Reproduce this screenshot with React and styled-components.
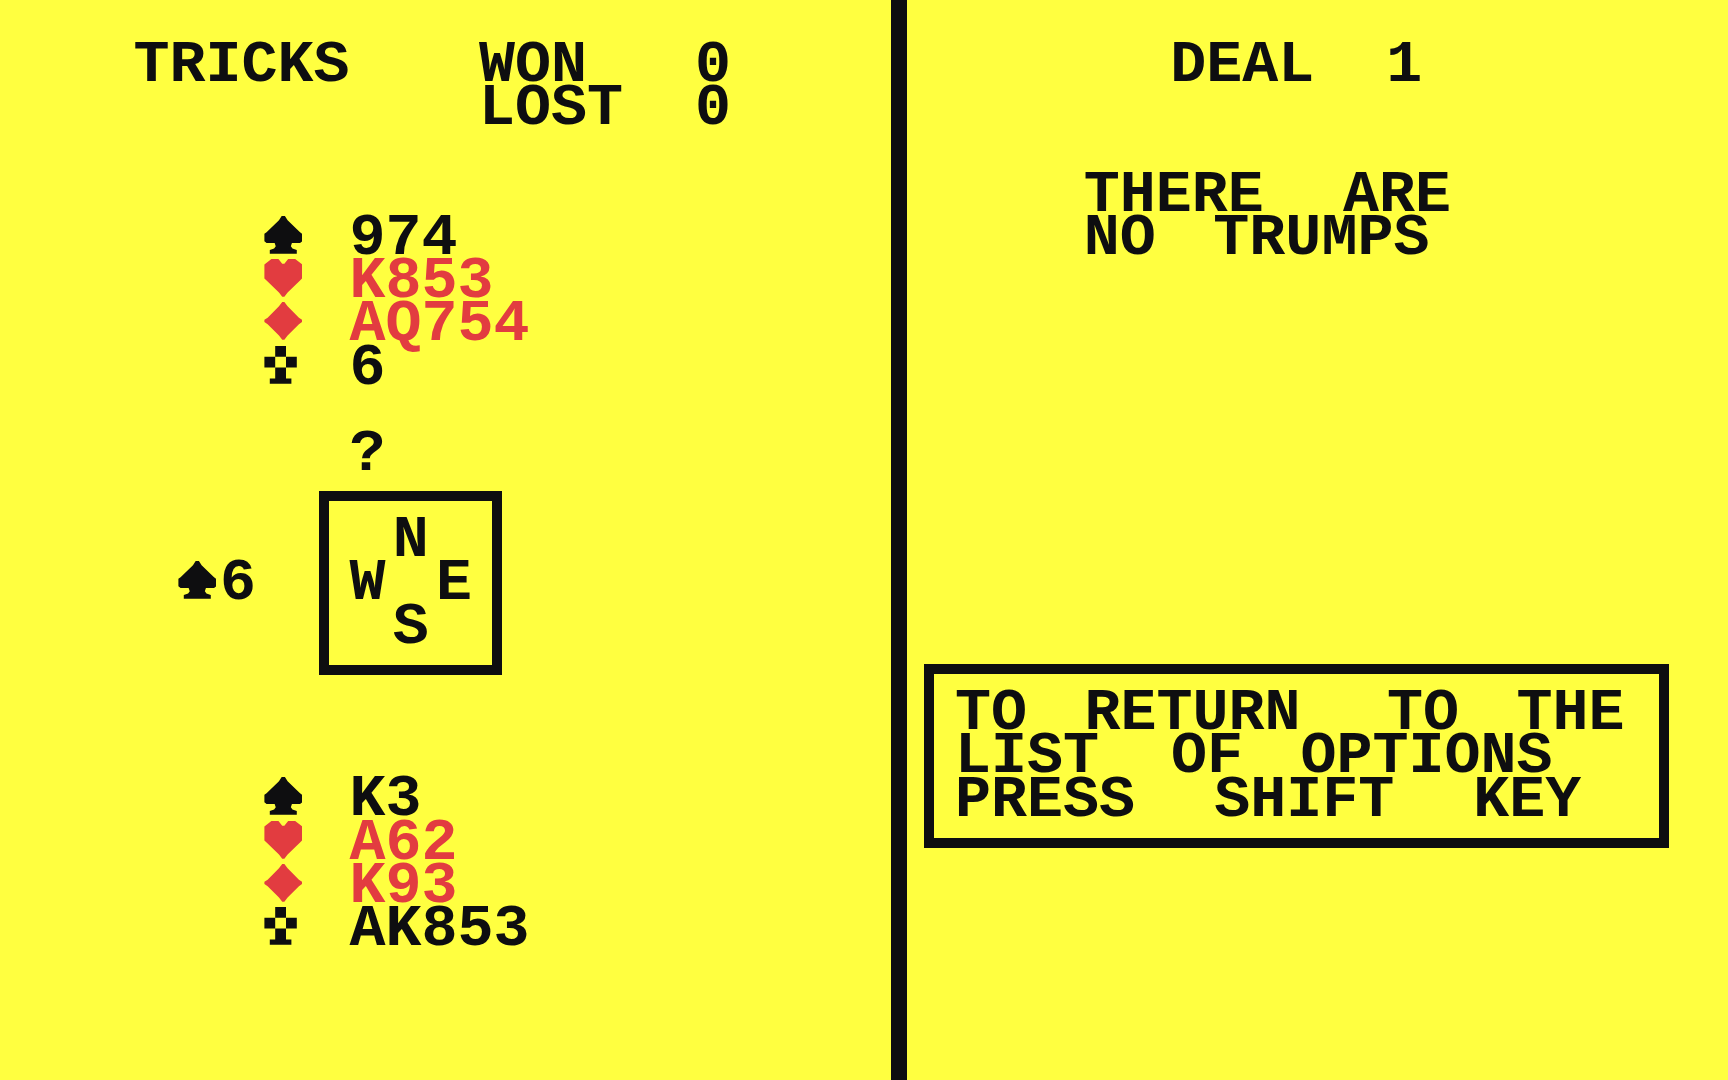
import React from 'react';
import styled, { createGlobalStyle } from 'styled-components';


const GlobalStyle = createGlobalStyle`
  body {
    margin: 0;
    background: #ffff40;
  }
`

//the screen is 40 columns by 25 rows of character cells
const Screen = styled.main`
  --col: 2.5vw;
  --row: 4vh;
  display: grid;
  grid-template-columns: 891fr 16px 821fr;
  min-height: 100vh;
  overflow: hidden;
  background: #ffff40;
  color: #0e0e10;
  font-family: "Liberation Mono", monospace;
  font-size: 60px;
  font-weight: 700;
`

const Divider = styled.div`
  background: #0e0e10;
`

const Panel = styled.section`
  padding-top: var(--row);
  min-width: 0;
`

//blank rows
const Gap = styled.div`
  height: calc(var(--row) * ${(props) => props.$rows});
`

const Indent = styled.div`
  padding-left: calc(var(--col) * ${(props) => props.$cols});
`

const Line = styled.p`
  display: grid;
  grid-auto-columns: var(--col);
  height: var(--row);
  margin: 0;
  line-height: var(--row);
  white-space: nowrap;
  color: ${(props) => (props.$red ? '#e23c40' : 'inherit')};
`

const Word = styled.span`
  grid-row: 1;
  grid-column: ${(props) => props.$at + 1} / span ${(props) => props.$length};
  padding: 1px 0 0 4px;
`

const Pip = styled.svg`
  grid-row: 1;
  grid-column: 1;
  width: var(--col);
  height: var(--row);
  fill: currentColor;
`

//compass and the card that was led
const Table = styled.div`
  display: grid;
  grid-template-columns: calc(var(--col) * 2) calc(var(--col) * 7);
  align-items: center;
  justify-items: center;
  height: calc(var(--row) * 5);
  padding-left: calc(var(--col) * 4);
`

const Played = styled.div`
  justify-self: start;
`

const Frame = styled.div`
  box-sizing: content-box;
  width: calc(var(--col) * ${(props) => props.$cols});
  padding: 17px;
  border: 10px solid #0e0e10;
`

const Message = styled.div`
  display: flex;
  align-items: center;
  height: calc(var(--row) * 5);
  padding-left: 17px;
`

//drawn on the 8 by 8 grid of one character cell
const pips = {
  spades: 'M4.2 0h.6L5.3 .8L7.6 3L8 3.3V4.7L7.6 5H6.1L5.9 5.6L6.2 6L7 6.3V7H2V6.3L2.8 6L3.1 5.6L2.9 5H1.4L1 4.7V3.3L1.4 3L3.7 .8z',
  hearts: 'M2.3 0h1.3L4.3 .9h.4L5.4 0h1.3L8 1V3.6L7.6 4L5.3 6.2L4.7 7H4.3L3.7 6.2L1.4 4L1 3.6V1z',
  diamonds: 'M4.3 0h.4L5.3 .8L7.4 2.9L8 3.3v.4L7.4 4.1L5.3 6.2L4.7 7h-.4L3.7 6.2L1.6 4.1L1 3.7v-.4L1.6 2.9L3.7 .8z',
  clubs: 'M3 0h2v2h2v2H5v2h1v1H2V6h1V4H1V2h2zM3 2v2h2V2z',
}

const north = [
  { suit: 'spades', cards: '974' },
  { suit: 'hearts', cards: 'K853' },
  { suit: 'diamonds', cards: 'AQ754' },
  { suit: 'clubs', cards: '6' },
]

const south = [
  { suit: 'spades', cards: 'K3' },
  { suit: 'hearts', cards: 'A62' },
  { suit: 'diamonds', cards: 'K93' },
  { suit: 'clubs', cards: 'AK853' },
]


const Suit = ({ name }) => (
  <Pip viewBox="0 0 8 8" preserveAspectRatio="none" role="img" aria-label={name}>
    <path fillRule="evenodd" d={pips[name]} />
  </Pip>
)

//every word starts on its own cell
const Text = ({ children }) => (
  <Line>
    {[...children.matchAll(/\S+/g)].map((word) => (
      <Word key={word.index} $at={word.index} $length={word[0].length}>{word[0]}</Word>
    ))}
  </Line>
)

const Hand = ({ cards }) => (
  <Indent $cols={6}>
    {cards.map((holding) => (
      <Line key={holding.suit} $red={holding.suit === 'hearts' || holding.suit === 'diamonds'}>
        <Suit name={holding.suit} />
        <Word $at={2} $length={holding.cards.length}>{holding.cards}</Word>
      </Line>
    ))}
  </Indent>
)


const App = () => {
  return (
    <Screen>
      <GlobalStyle />
      <Panel>
        <Indent $cols={3}>
          <Text>{'TRICKS  WON  0'}</Text>
          <Text>{'        LOST 0'}</Text>
        </Indent>
        <Gap $rows={2} />
        <Hand cards={north} />
        <Gap $rows={1} />
        <Indent $cols={8}>
          <Text>?</Text>
        </Indent>
        <Table>
          <Played>
            <Line>
              <Suit name="spades" />
              <Word $at={1} $length={1}>6</Word>
            </Line>
          </Played>
          <Frame $cols={3}>
            <Text>{' N '}</Text>
            <Text>{'W E'}</Text>
            <Text>{' S '}</Text>
          </Frame>
        </Table>
        <Gap $rows={2} />
        <Hand cards={south} />
      </Panel>
      <Divider />
      <Panel>
        <Indent $cols={6}>
          <Text>DEAL 1</Text>
        </Indent>
        <Gap $rows={2} />
        <Indent $cols={4}>
          <Text>THERE ARE</Text>
          <Text>NO TRUMPS</Text>
        </Indent>
        <Gap $rows={9} />
        <Message>
          <Frame $cols={16}>
            <Text>TO RETURN TO THE</Text>
            <Text>LIST OF OPTIONS</Text>
            <Text>PRESS SHIFT KEY</Text>
          </Frame>
        </Message>
      </Panel>
    </Screen>
  );
}

export default App;
